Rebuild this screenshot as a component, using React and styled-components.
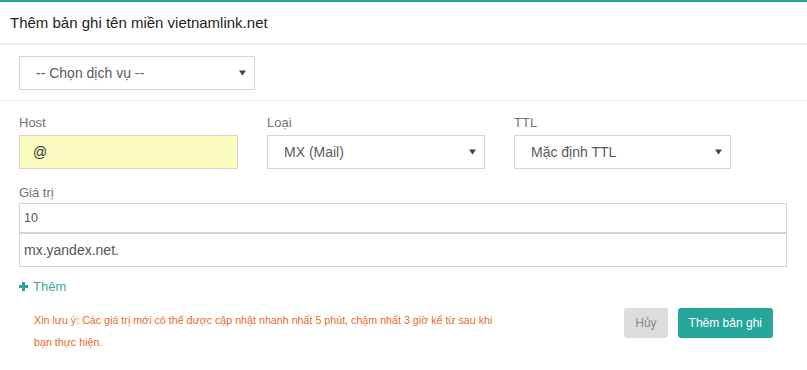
import React from "react";
import styled, { createGlobalStyle } from "styled-components";

const GlobalStyle = createGlobalStyle`
  html, body { margin: 0; padding: 0; background: #ffffff; }
  body { font-family: "Liberation Sans", Arial, sans-serif; color: #333; }
  * { box-sizing: border-box; }
`;

const Modal = styled.div`
  width: 807px;
  border-top: 2px solid #26a69a;
  background: #fff;
`;

const Header = styled.div`
  height: 43px;
  padding: 0 10px;
  border-bottom: 2px solid #eeeeee;
`;

const Title = styled.h4`
  margin: 0;
  font-size: 15px;
  font-weight: 400;
  line-height: 41px;
  color: #222;
`;

const ServiceBar = styled.div`
  padding: 11px 19px 10px;
  border-bottom: 1px solid #eeeeee;
`;

const SelectBox = styled.div`
  display: flex;
  align-items: center;
  justify-content: space-between;
  width: ${(p) => p.$width || "100%"};
  height: 34px;
  padding: 0 ${(p) => p.$arrowGap || 8}px 0 16px;
  border: 1px solid #d4d4d4;
  background: #fff;
  font-size: 14px;
  color: #5a5a5a;
  cursor: pointer;
`;

const Caret = () => (
  <svg width="7" height="6" viewBox="0 0 7 6" aria-hidden="true">
    <path d="M0 0.5 H7 L3.5 5.5 Z" fill="#444" />
  </svg>
);

const Form = styled.div`
  padding: 13px 20px 0 19px;
`;

const FieldGrid = styled.div`
  display: grid;
  grid-template-columns: 219px 218px 217px;
  column-gap: 29px;
`;

const Field = styled.div`
  display: flex;
  flex-direction: column;
`;

const Label = styled.label`
  display: block;
  font-size: 13px;
  line-height: 17px;
  color: #727272;
  margin-bottom: ${(p) => p.$gap ?? 4}px;
`;

const TextInput = styled.input`
  width: 100%;
  height: 34px;
  padding: 0 0 0 13px;
  border: 1px solid #d4d4d4;
  background: ${(p) => (p.$highlight ? "#fafcc0" : "#fff")};
  font-family: inherit;
  font-size: 14px;
  color: #333;
  outline: none;
`;

const ValueField = styled.div`
  margin-top: 15px;
`;

const ValueStack = styled.div`
  display: flex;
  flex-direction: column;
`;

const ValueInput = styled.input`
  width: 100%;
  height: ${(p) => (p.$compact ? 30 : 34)}px;
  padding: 0 0 0 4px;
  border: 1px solid #d4d4d4;
  background: #fff;
  font-family: inherit;
  font-size: ${(p) => (p.$compact ? 12.5 : 14)}px;
  color: #555;
  outline: none;
`;

const AddLink = styled.a`
  display: inline-flex;
  align-items: center;
  gap: 5px;
  margin-top: 11px;
  font-size: 13px;
  line-height: 17px;
  color: #3aab9c;
  text-decoration: none;
  cursor: pointer;
`;

const PlusIcon = () => (
  <svg width="9" height="9" viewBox="0 0 9 9" aria-hidden="true">
    <rect x="3" y="0" width="3" height="9" fill="#26a69a" />
    <rect x="0" y="3" width="9" height="3" fill="#26a69a" />
  </svg>
);

const Footer = styled.div`
  display: flex;
  justify-content: space-between;
  align-items: flex-start;
  margin-top: 13px;
  padding: 0 14px 0 15px;
`;

const Notice = styled.p`
  margin: 0;
  margin-top: 1px;
  max-width: 470px;
  font-size: 10.7px;
  line-height: 22px;
  color: #ea6a2a;
`;

const Actions = styled.div`
  display: flex;
  gap: 10px;
`;

const Button = styled.button`
  height: 30px;
  padding: 5px 10px;
  border: 1px solid transparent;
  border-radius: 3px;
  font-family: inherit;
  font-size: 12px;
  line-height: 18px;
  cursor: pointer;
  background: ${(p) => (p.$variant === "primary" ? "#26a69a" : "#dddddd")};
  color: ${(p) => (p.$variant === "primary" ? "#ffffff" : "#888888")};
`;

export default function App() {
  return (
    <>
      <GlobalStyle />
      <Modal>
        <Header>
          <Title>Thêm bản ghi tên miền vietnamlink.net</Title>
        </Header>
        <ServiceBar>
          <SelectBox $width="236px" $arrowGap={8}>
            <span>-- Chọn dịch vụ --</span>
            <Caret />
          </SelectBox>
        </ServiceBar>
        <Form>
          <FieldGrid>
            <Field>
              <Label>Host</Label>
              <TextInput $highlight defaultValue="@" />
            </Field>
            <Field>
              <Label>Loại</Label>
              <SelectBox>
                <span>MX (Mail)</span>
                <Caret />
              </SelectBox>
            </Field>
            <Field>
              <Label>TTL</Label>
              <SelectBox>
                <span>Mặc định TTL</span>
                <Caret />
              </SelectBox>
            </Field>
          </FieldGrid>
          <ValueField>
            <Label $gap={2}>Giá trị</Label>
            <ValueStack>
              <ValueInput $compact defaultValue="10" />
              <ValueInput defaultValue="mx.yandex.net." />
            </ValueStack>
          </ValueField>
          <AddLink>
            <PlusIcon />
            Thêm
          </AddLink>
          <Footer>
            <Notice>
              Xin lưu ý: Các giá trị mới có thể được cập nhật nhanh nhất 5 phút, chậm nhất 3 giờ kể từ sau khi bạn thực hiện.
            </Notice>
            <Actions>
              <Button $variant="muted">Hủy</Button>
              <Button $variant="primary">Thêm bản ghi</Button>
            </Actions>
          </Footer>
        </Form>
      </Modal>
    </>
  );
}
